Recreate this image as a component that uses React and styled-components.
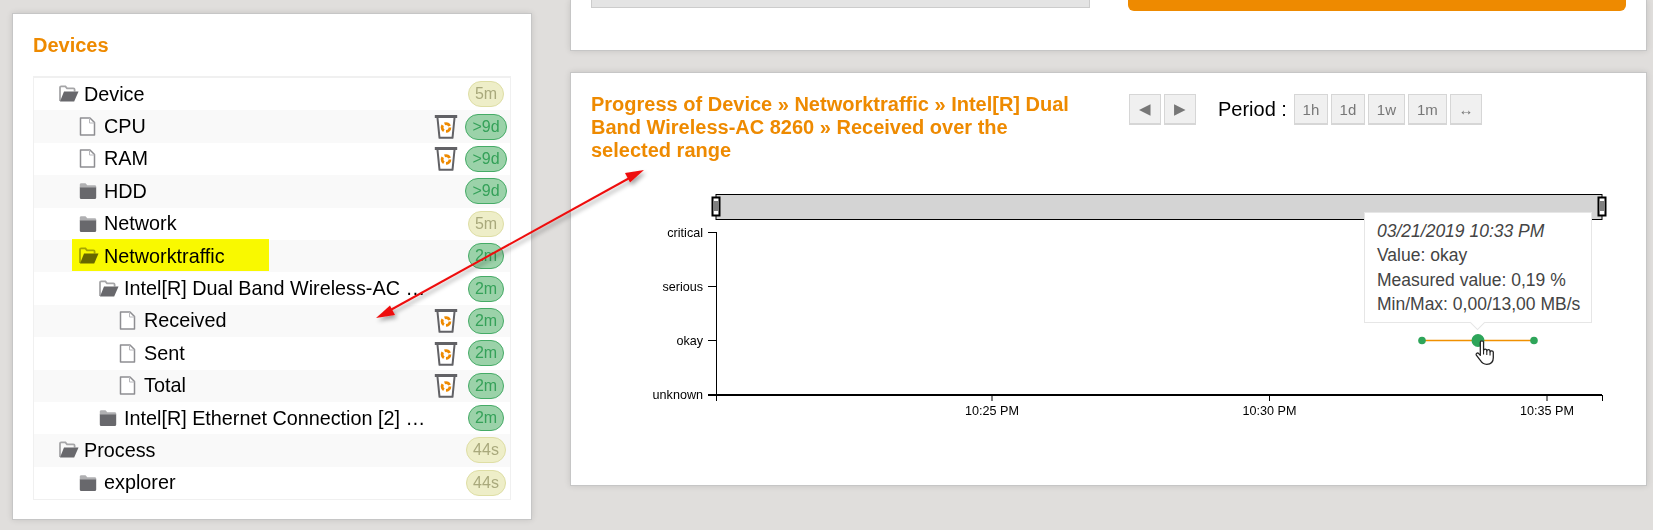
import React from "react"
import styled, { createGlobalStyle } from "styled-components"

const ORANGE = "#ee8a00"
const FONT = `"Liberation Sans", Arial, sans-serif`

const GlobalStyle = createGlobalStyle`
  html, body {
    margin: 0;
    padding: 0;
    background: #e0dedc;
    font-family: ${FONT};
    overflow: hidden;
  }
`

const tree = [
  { label: "Device", depth: 0, icon: "open", age: "5m", tone: "warn" },
  { label: "CPU", depth: 1, icon: "file", age: ">9d", tone: "ok", trash: true },
  { label: "RAM", depth: 1, icon: "file", age: ">9d", tone: "ok", trash: true },
  { label: "HDD", depth: 1, icon: "closed", age: ">9d", tone: "ok" },
  { label: "Network", depth: 1, icon: "closed", age: "5m", tone: "warn" },
  { label: "Networktraffic", depth: 1, icon: "open", age: "2m", tone: "ok", marked: true },
  { label: "Intel[R] Dual Band Wireless-AC 8260", depth: 2, icon: "open", age: "2m", tone: "ok" },
  { label: "Received", depth: 3, icon: "file", age: "2m", tone: "ok", trash: true },
  { label: "Sent", depth: 3, icon: "file", age: "2m", tone: "ok", trash: true },
  { label: "Total", depth: 3, icon: "file", age: "2m", tone: "ok", trash: true },
  { label: "Intel[R] Ethernet Connection [2] I219-V", depth: 2, icon: "closed", age: "2m", tone: "ok" },
  { label: "Process", depth: 0, icon: "open", age: "44s", tone: "warn" },
  { label: "explorer", depth: 1, icon: "closed", age: "44s", tone: "warn" },
]

const levels = [
  { label: "critical", y: 232.5 },
  { label: "serious", y: 286.5 },
  { label: "okay", y: 340.5 },
]

const hours = [
  { label: "10:25 PM", x: 992 },
  { label: "10:30 PM", x: 1269.5 },
  { label: "10:35 PM", x: 1547 },
]

const FolderOpen = () => (
  <svg width="20" height="18" viewBox="0 0 20 18">
    <path d="M1 16V2.6C1 1.9 1.5 1.4 2.2 1.4h4.2l1.6 2h6.400c.7 0 1.200.5 1.200 1.200v2" fill="none" stroke="#a6a6a8" strokeWidth="1.8" />
    <path d="M5 6.600h14.500l-4.300 10H1z" fill="#68686c" />
  </svg>
)

const FolderClosed = () => (
  <svg width="18" height="18" viewBox="0 0 18 18">
    <path d="M.8 6V2.600c0-.8.6-1.400 1.400-1.400h4.300l1.800 2h7.500c.8 0 1.400.6 1.400 1.400V6z" fill="#b0b0b2" />
    <path d="M.8 5.600h16.400v10c0 .9-.6 1.500-1.400 1.500H2.200c-.8 0-1.400-.6-1.400-1.500z" fill="#68686c" />
  </svg>
)

const FileIcon = () => (
  <svg width="17" height="19" viewBox="0 0 17 19">
    <path d="M1.500 1h9.500l4.500 4.500V18h-14z" fill="#fff" stroke="#8e8e92" strokeWidth="1.5" strokeLinejoin="round" />
    <path d="M10.500 1v5h5" fill="none" stroke="#b8b8bc" strokeWidth="1" />
  </svg>
)

const TrashIcon = () => (
  <svg width="24" height="25" viewBox="0 0 24 25">
    <path d="M.8 1h22.400v3H.8z" fill="#626266" />
    <path d="M3.500 4l2 19.800h13L20.500 4" fill="#fff" stroke="#626266" strokeWidth="2" strokeLinejoin="round" />
    <circle cx="12" cy="13.500" r="3.900" fill="none" stroke="#ee8a00" strokeWidth="2.800" strokeDasharray="6 2.200" />
  </svg>
)

const HandCursor = () => (
  <g transform="translate(1476 340) scale(1.08)" stroke="#222" strokeWidth="1.200" fill="#fff" strokeLinejoin="round">
    <path d="M4 2c0-1.600 3-1.600 3 0v7.500c.3-1.500 2.800-1.500 3 0v.6c.3-1.500 2.800-1.500 3 0v.8c.3-1.300 2.800-1.200 3 .3v5.300c0 3.500-2.200 6-6 6-3.300 0-4.700-1.300-6-3.700L.3 14c-.8-1.500 1.200-2.600 2.200-1.400L4 14.200z" />
    <path d="M7 9.500v4M10 10v4M13 10.800v3.500" fill="none" strokeWidth="1" />
  </g>
)

const icons = { open: FolderOpen, closed: FolderClosed, file: FileIcon }

const Page = styled.div`
  position: relative;
  display: flex;
  align-items: flex-start;
  width: 1653px;
  height: 530px;
  overflow: hidden;
  background: #e0dedc;
`

const Panel = styled.section`
  box-sizing: border-box;
  background: #fff;
  border: 1px solid #c6c6c6;
  box-shadow: 0 0 6px rgba(0, 0, 0, 0.12);
`

const DevicePanel = styled(Panel)`
  width: 520px;
  height: 507px;
  margin: 13px 38px 0 12px;
  padding: 20px 20px 0 20px;
`

const PanelTitle = styled.h2`
  margin: 0;
  font-size: 20px;
  line-height: 23px;
  font-weight: bold;
  color: ${ORANGE};
`

const TreeList = styled.ul`
  list-style: none;
  margin: 19px 0 0;
  padding: 0;
  border: 1px solid #f0f0f0;
  border-top-width: 2px;
`

const TreeRow = styled.li`
  position: relative;
  display: flex;
  align-items: center;
  height: 32.4px;
  background: ${(p) => (p.$striped ? "#f9f9f9" : "#fff")};
`

const NodeIcon = styled.span`
  flex: none;
  display: flex;
  align-items: center;
  width: 25px;
  margin-left: ${(p) => 25 + p.$depth * 20}px;
`

const NodeLabel = styled.span`
  flex: 1;
  min-width: 0;
  overflow: hidden;
  white-space: nowrap;
  text-overflow: ellipsis;
  font-size: 19.8px;
  color: #000;
`

const TrashSlot = styled.span`
  flex: none;
  display: flex;
  justify-content: center;
  width: 24px;
  margin: 0 4px 0 8px;
`

const BadgeSlot = styled.span`
  flex: none;
  display: flex;
  justify-content: center;
  width: 48px;
`

const Badge = styled.span`
  box-sizing: border-box;
  height: 26px;
  padding: 0 6px;
  border-radius: 13px;
  font-size: 16px;
  line-height: 24px;
  background: ${(p) => (p.$tone === "ok" ? "#9bd2a9" : "#eeeec8")};
  border: 1px solid ${(p) => (p.$tone === "ok" ? "#45ab66" : "#dedea4")};
  color: ${(p) => (p.$tone === "ok" ? "#35a159" : "#a9a97c")};
`

const Marker = styled.span`
  position: absolute;
  left: 38px;
  top: -1px;
  width: 197px;
  height: 32px;
  background: #ffff00;
  mix-blend-mode: multiply;
`

const MainColumn = styled.div`
  display: flex;
  flex-direction: column;
  gap: 21px;
  width: 1077px;
`

const FormPanel = styled(Panel)`
  display: flex;
  height: 51px;
  gap: 38px;
  padding: 0 20px;
  border-top: none;
`

const SearchField = styled.div`
  box-sizing: border-box;
  width: 499px;
  height: 8px;
  background: #e4e4e4;
  border: 1px solid #ccc;
  border-top: none;
`

const SubmitBar = styled.div`
  flex: 1;
  height: 11px;
  background: ${ORANGE};
  border-radius: 0 0 6px 6px;
`

const ChartPanel = styled(Panel)`
  height: 414px;
  padding: 20px 20px 0 20px;
`

const ChartHeader = styled.header`
  display: flex;
  align-items: flex-start;
  height: 68px;
`

const ChartTitle = styled(PanelTitle)`
  flex: none;
  width: 490px;
`

const Controls = styled.div`
  display: flex;
  align-items: center;
  margin: 1px 0 0 48px;
`

const ToolButton = styled.button`
  box-sizing: border-box;
  display: flex;
  align-items: center;
  justify-content: center;
  width: ${(p) => p.$w}px;
  height: 31px;
  margin-right: ${(p) => p.$gap ?? 3}px;
  padding: 0;
  background: #f0f0f0;
  border: 1px solid #d6d6d6;
  border-bottom-width: 2px;
  font-family: ${FONT};
  font-size: 15px;
  color: #777;
`

const PeriodLabel = styled.span`
  margin: 0 7px 0 22px;
  font-size: 20px;
  color: #000;
`

const ChartArea = styled.div`
  position: relative;
  margin-top: 24px;
`

const ChartSvg = styled.svg`
  display: block;
  font-family: ${FONT};
`

const Tooltip = styled.div`
  position: absolute;
  left: 773px;
  top: 27px;
  box-sizing: border-box;
  width: 228px;
  height: 111px;
  padding: 6px 12px;
  background: #fff;
  border: 1px solid #e6e6e6;
  font-size: 17.5px;
  line-height: 24.3px;
  color: #444;
  white-space: nowrap;

  &::after {
    content: "";
    position: absolute;
    left: 107px;
    bottom: -6px;
    width: 10px;
    height: 10px;
    background: #fff;
    border-right: 1px solid #e6e6e6;
    border-bottom: 1px solid #e6e6e6;
    transform: rotate(45deg);
  }
`

const TooltipDate = styled.div`
  font-style: italic;
`

const ArrowOverlay = styled.svg`
  position: absolute;
  left: 0;
  top: 0;
  pointer-events: none;
`

const Handle = ({ x }) => (
  <g>
    <rect x={x - 3.5} y="197.5" width="7" height="18" fill="#fff" stroke="#000" strokeWidth="2" />
    <path d={`M${x - 1} 201v10M${x + 1} 201v10`} stroke="#000" strokeWidth="1" />
  </g>
)

const RangeChart = () => (
  <ChartSvg width="1036" height="240" viewBox="591 185 1036 240">
    <rect x="716" y="194.5" width="886" height="25" fill="#d4d4d4" stroke="#000" strokeWidth="1" />
    <Handle x={716} />
    <Handle x={1602} />

    <path d="M716.5 232v169" stroke="#000" strokeWidth="1" />
    {levels.map((l) => (
      <g key={l.label}>
        <path d={`M708 ${l.y}h8.5`} stroke="#000" strokeWidth="1" />
        <text x="703" y={l.y + 4} textAnchor="end" fontSize="12.6" fill="#000">
          {l.label}
        </text>
      </g>
    ))}
    <text x="703" y="399" textAnchor="end" fontSize="12.6" fill="#000">
      unknown
    </text>

    <path d="M708 395h894" stroke="#000" strokeWidth="2" />
    <path d="M1602.5 395v6" stroke="#000" strokeWidth="1" />
    {hours.map((h) => (
      <g key={h.label}>
        <path d={`M${h.x} 395v6`} stroke="#000" strokeWidth="1" />
        <text x={h.x} y="415" textAnchor="middle" fontSize="12.6" fill="#000">
          {h.label}
        </text>
      </g>
    ))}

    <path d="M1422 340.5h112" stroke="#f09000" strokeWidth="1.5" />
    <circle cx="1422" cy="340.5" r="3.8" fill="#2ea55a" />
    <circle cx="1534" cy="340.5" r="3.8" fill="#2ea55a" />
    <circle cx="1478" cy="340.5" r="6.5" fill="#2ea55a" />
    <HandCursor />
  </ChartSvg>
)

const App = () => (
  <Page>
    <GlobalStyle />
    <DevicePanel>
      <PanelTitle>Devices</PanelTitle>
      <TreeList>
        {tree.map((node, i) => {
          const Icon = icons[node.icon]
          return (
            <TreeRow key={node.label} $striped={i % 2 === 1}>
              <NodeIcon $depth={node.depth}>
                <Icon />
              </NodeIcon>
              <NodeLabel>{node.label}</NodeLabel>
              <TrashSlot>{node.trash && <TrashIcon />}</TrashSlot>
              <BadgeSlot>
                <Badge $tone={node.tone}>{node.age}</Badge>
              </BadgeSlot>
              {node.marked && <Marker />}
            </TreeRow>
          )
        })}
      </TreeList>
    </DevicePanel>

    <MainColumn>
      <FormPanel>
        <SearchField />
        <SubmitBar />
      </FormPanel>

      <ChartPanel>
        <ChartHeader>
          <ChartTitle>
            Progress of Device » Networktraffic » Intel[R] Dual Band Wireless-AC 8260 » Received over the selected range
          </ChartTitle>
          <Controls>
            <ToolButton $w={32}>◀</ToolButton>
            <ToolButton $w={32} $gap={0}>▶</ToolButton>
            <PeriodLabel>Period :</PeriodLabel>
            <ToolButton $w={34}>1h</ToolButton>
            <ToolButton $w={34}>1d</ToolButton>
            <ToolButton $w={37}>1w</ToolButton>
            <ToolButton $w={39}>1m</ToolButton>
            <ToolButton $w={32} $gap={0}>↔</ToolButton>
          </Controls>
        </ChartHeader>
        <ChartArea>
          <RangeChart />
          <Tooltip>
            <TooltipDate>03/21/2019 10:33 PM</TooltipDate>
            <div>Value: okay</div>
            <div>Measured value: 0,19 %</div>
            <div>Min/Max: 0,00/13,00 MB/s</div>
          </Tooltip>
        </ChartArea>
      </ChartPanel>
    </MainColumn>

    <ArrowOverlay width="1653" height="530" viewBox="0 0 1653 530">
      <defs>
        <filter id="arrowShadow" x="-10%" y="-10%" width="120%" height="130%">
          <feDropShadow dx="2" dy="3" stdDeviation="2" floodColor="#000" floodOpacity="0.35" />
        </filter>
      </defs>
      <g filter="url(#arrowShadow)">
        <path d="M386 312.5L634 175.5" stroke="#ee1111" strokeWidth="2" />
        <path d="M376 318L390 305.5L395 315z" fill="#ee1111" />
        <path d="M644 170L630 182.5L625 173z" fill="#ee1111" />
      </g>
    </ArrowOverlay>
  </Page>
)

export default App
